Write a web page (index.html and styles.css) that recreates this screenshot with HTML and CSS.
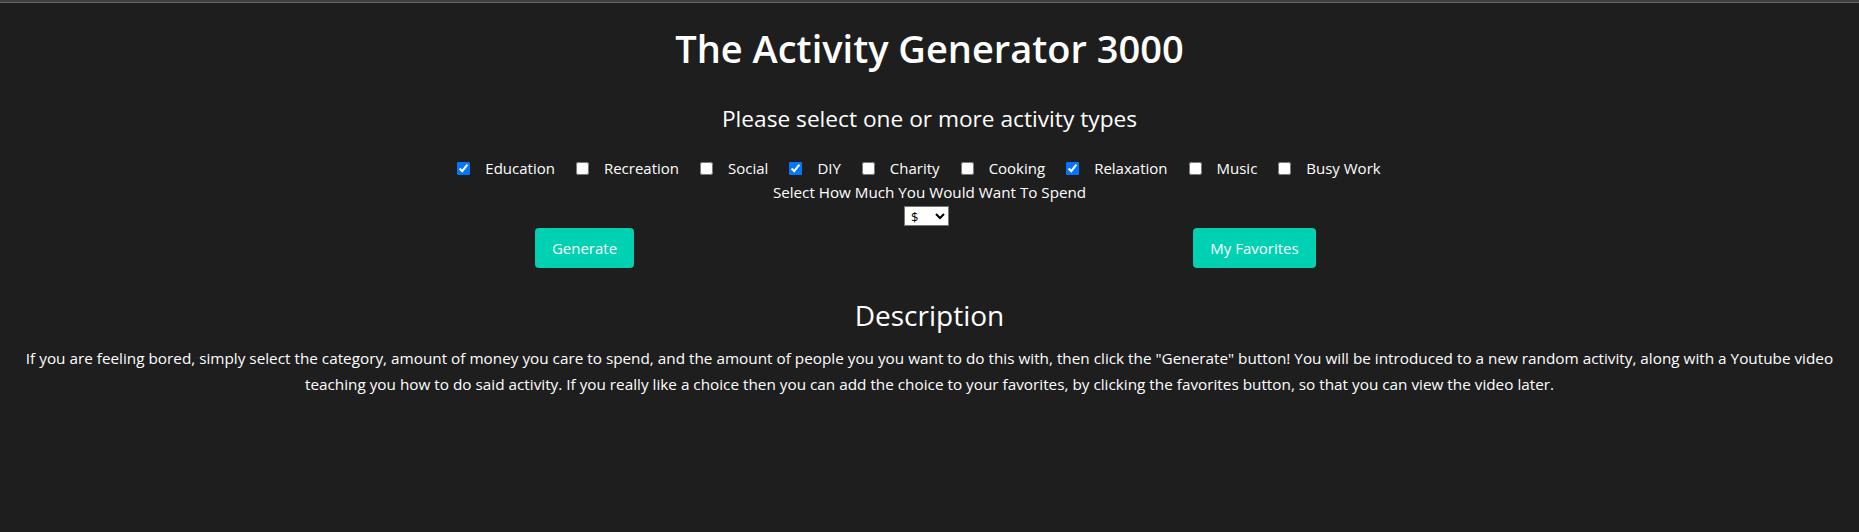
FILE: index.html
```html
<!DOCTYPE html>
<html lang="en">
<head>
<meta charset="utf-8">
<title>The Activity Generator 3000</title>
<link rel="stylesheet" href="styles.css">
</head>
<body>
<div class="topbar"></div>
<main class="page">
  <h1 class="title">The Activity Generator 3000</h1>
  <h2 class="subtitle">Please select one or more activity types</h2>
  <div class="types">
    <label class="type"><input type="checkbox" checked><span>Education</span></label>
    <label class="type"><input type="checkbox"><span>Recreation</span></label>
    <label class="type"><input type="checkbox"><span>Social</span></label>
    <label class="type"><input type="checkbox" checked><span>DIY</span></label>
    <label class="type"><input type="checkbox"><span>Charity</span></label>
    <label class="type"><input type="checkbox"><span>Cooking</span></label>
    <label class="type"><input type="checkbox" checked><span>Relaxation</span></label>
    <label class="type"><input type="checkbox"><span>Music</span></label>
    <label class="type"><input type="checkbox"><span>Busy Work</span></label>
  </div>
  <div class="spend-label">Select How Much You Would Want To Spend</div>
  <div class="spend-row">
    <select class="spend">
      <option>$</option>
      <option>$$</option>
      <option>$$$</option>
    </select>
  </div>
  <div class="actions">
    <div class="action-cell"><button class="btn">Generate</button></div>
    <div class="action-cell"><button class="btn">My Favorites</button></div>
  </div>
  <h2 class="desc-title">Description</h2>
  <p class="desc">If you are feeling bored, simply select the category, amount of money you care to spend, and the amount of people you you want to do this with, then click the "Generate" button! You will be introduced to a new random activity, along with a Youtube video teaching you how to do said activity. If you really like a choice then you can add the choice to your favorites, by clicking the favorites button, so that you can view the video later.</p>
</main>
</body>
</html>
```

FILE: styles.css
```css
html, body {
  margin: 0;
  padding: 0;
  background: #1e1e1e;
}

body {
  font-family: "Open Sans", "Noto Sans", sans-serif;
  color: #ffffff;
  height: 532px;
  overflow: hidden;
}

.topbar {
  height: 2px;
  background: #3f3f41;
  border-bottom: 1px solid #68686a;
}

.page {
  margin: 0 8px;
  text-align: center;
}

.title {
  margin: 21px 0 0;
  font-size: 38px;
  line-height: 48px;
  font-weight: 600;
  color: #ffffff;
}

.subtitle {
  margin: 31px 0 0;
  font-size: 22.7px;
  line-height: 32px;
  font-weight: 400;
  color: #ffffff;
}

.types {
  margin-top: 21px;
  display: flex;
  justify-content: center;
  align-items: center;
  height: 24px;
  font-size: 15px;
}

.type {
  display: flex;
  align-items: center;
  margin-right: 21px;
}

.type input {
  margin: 0 15px 0 0;
  width: 13px;
  height: 13px;
  accent-color: #0075ff;
}

.spend-label {
  font-size: 15.2px;
  line-height: 24px;
}

.spend-row {
  margin-top: 2px;
  height: 20px;
  display: flex;
  justify-content: center;
  padding-right: 6px;
}

.spend {
  width: 45px;
  height: 20px;
  font-family: "Open Sans", sans-serif;
  font-size: 13px;
  background: #ffffff;
  color: #000000;
  border: 1px solid #767676;
  border-radius: 0;
  padding: 0 0 0 2px;
}

.actions {
  margin-top: 2px;
  display: flex;
  justify-content: center;
  padding-right: 20px;
}

.action-cell {
  width: 670px;
  display: flex;
  justify-content: center;
}

.btn {
  height: 40px;
  padding: 0 16px;
  border: 1px solid transparent;
  border-radius: 4px;
  background: #00d1b2;
  color: #ffffff;
  font-family: "Open Sans", sans-serif;
  font-size: 15px;
  cursor: pointer;
}

.desc-title {
  margin: 27px 0 0;
  font-size: 28px;
  line-height: 40px;
  font-weight: 400;
}

.desc {
  margin: 10px 0 0;
  font-size: 15.3px;
  line-height: 26px;
  padding: 0;
}
```
